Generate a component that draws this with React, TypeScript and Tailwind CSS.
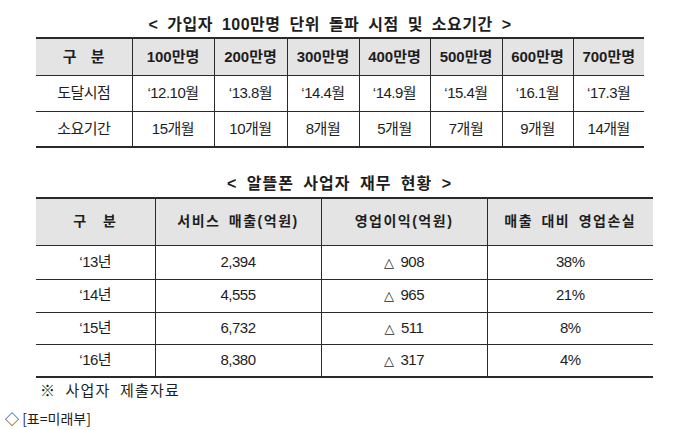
import React from "react";

const font = { fontFamily: '"Liberation Sans", "Noto Sans CJK KR", sans-serif' };

const t1Cols = [96, 82, 73, 72, 71, 72, 71, 71];
const t1Head = ["구 분", "100만명", "200만명", "300만명", "400만명", "500만명", "600만명", "700만명"];
const t1Rows = [
  ["도달시점", "‘12.10월", "‘13.8월", "‘14.4월", "‘14.9월", "‘15.4월", "‘16.1월", "‘17.3월"],
  ["소요기간", "15개월", "10개월", "8개월", "5개월", "7개월", "9개월", "14개월"],
];

const t2Cols = [119, 166, 166, 166];
const t2Head = ["구 분", "서비스 매출(억원)", "영업이익(억원)", "매출 대비 영업손실"];
const t2Rows = [
  ["‘13년", "2,394", "908", "38%"],
  ["‘14년", "4,555", "965", "21%"],
  ["‘15년", "6,732", "511", "8%"],
  ["‘16년", "8,380", "317", "4%"],
];
const t2Heights = [34, 33, 32, 33];

export default function App() {
  return (
    <div className="w-[680px] h-[430px] bg-white text-[#1e1e1e] overflow-hidden" style={font}>
      <div className="flex flex-col pl-[36px]">
        <div className="w-[608px] h-[37px] pt-[15px] pr-[20px] text-center text-[16px] leading-[20px] font-bold tracking-[0.5px] [word-spacing:4px]">
          &lt; 가입자 100만명 단위 돌파 시점 및 소요기간 &gt;
        </div>
        <table className="border-collapse table-fixed w-[608px] border-t-2 border-b-2 border-[#2a2a2a]">
          <colgroup>
            {t1Cols.map((w, i) => (
              <col key={i} style={{ width: w }} />
            ))}
          </colgroup>
          <tbody>
            <tr className="h-[37px] bg-[#e4e4e4]">
              {t1Head.map((h, i) => (
                <td
                  key={i}
                  className={`p-0 text-center text-[15px] font-bold border-b border-[#2a2a2a] ${i > 0 ? "border-l" : ""} ${i === 0 ? "[word-spacing:10px]" : ""}`}
                >
                  {h}
                </td>
              ))}
            </tr>
            {t1Rows.map((r, ri) => (
              <tr key={ri} className="h-[36px]">
                {r.map((c, i) => (
                  <td
                    key={i}
                    className={`p-0 text-center text-[15px] tracking-[-0.5px] ${ri === 0 ? "border-b" : ""} border-[#2a2a2a] ${i > 0 ? "border-l" : ""}`}
                  >
                    {c}
                  </td>
                ))}
              </tr>
            ))}
          </tbody>
        </table>

        <div className="w-[617px] h-[49px] pt-[26px] pr-[10px] text-center text-[16px] leading-[20px] font-bold tracking-[1px] [word-spacing:4px]">
          &lt; 알뜰폰 사업자 재무 현황 &gt;
        </div>
        <table className="border-collapse table-fixed w-[617px] border-t-2 border-b-2 border-[#2a2a2a]">
          <colgroup>
            {t2Cols.map((w, i) => (
              <col key={i} style={{ width: w }} />
            ))}
          </colgroup>
          <tbody>
            <tr className="h-[47px] bg-[#e4e4e4]">
              {t2Head.map((h, i) => (
                <td
                  key={i}
                  className={`p-0 text-center text-[14px] font-bold tracking-[1.5px] border-b border-[#2a2a2a] ${i > 0 ? "border-l" : ""} ${i === 0 ? "[word-spacing:10px]" : "[word-spacing:3px]"}`}
                >
                  {h}
                </td>
              ))}
            </tr>
            {t2Rows.map((r, ri) => (
              <tr key={ri} style={{ height: t2Heights[ri] }}>
                {r.map((c, i) => (
                  <td
                    key={i}
                    className={`p-0 text-center text-[15px] tracking-[-0.5px] ${ri < 3 ? "border-b" : ""} border-[#2a2a2a] ${i > 0 ? "border-l" : ""}`}
                  >
                    {i === 2 ? (
                      <>
                        <span className="text-[13px] mr-[7px]" style={{ fontFamily: '"DejaVu Sans", sans-serif' }}>
                          △
                        </span>
                        {c}
                      </>
                    ) : (
                      c
                    )}
                  </td>
                ))}
              </tr>
            ))}
          </tbody>
        </table>
        <div className="pl-[4px] h-[26px] text-[15px] leading-[26px] tracking-[1.2px] [word-spacing:4px]">
          ※ 사업자 제출자료
        </div>
      </div>
      <div className="pl-[5px] pt-[5px] text-[14px] leading-[18px]" style={{ fontFamily: '"Noto Sans CJK KR", sans-serif' }}>
        ◇ [표=미래부]
      </div>
    </div>
  );
}
